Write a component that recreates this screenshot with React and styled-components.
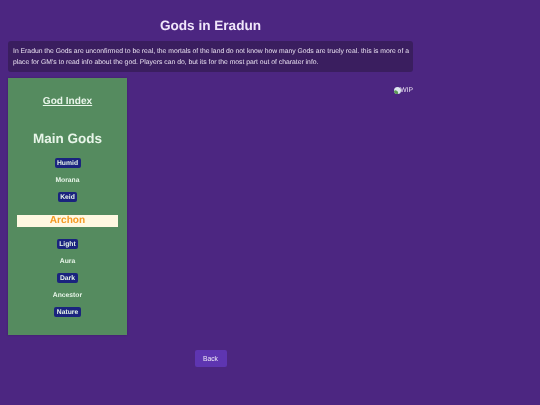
import React from "react";
import styled, { createGlobalStyle } from "styled-components";

const GlobalStyle = createGlobalStyle`
  html, body {
    margin: 0;
    padding: 0;
    background: #4c2681;
    font-family: "Liberation Sans", Arial, sans-serif;
    color: #f3e9fb;
    text-rendering: geometricPrecision;
  }
`;

const Page = styled.div`
  width: 405px;
  height: 405px;
  margin-left: 8px;
  display: flex;
  flex-direction: column;
  align-items: stretch;
  will-change: transform;
`;

const Title = styled.h1`
  margin: 0;
  padding-top: 17px;
  height: 24px;
  line-height: 17px;
  font-size: 13.6px;
  font-weight: 700;
  text-align: center;
  color: #f0e6fa;
`;

const Intro = styled.p`
  margin: 0;
  height: 31px;
  padding: 5px 4px 0 5px;
  box-sizing: border-box;
  background: #3a1e5f;
  border-radius: 3px;
  font-size: 6.8px;
  line-height: 11px;
  color: #e8e0f0;
`;

const Content = styled.div`
  display: flex;
  justify-content: space-between;
  align-items: flex-start;
  margin-top: 6px;
`;

const Sidebar = styled.aside`
  width: 119px;
  height: 257px;
  box-sizing: border-box;
  padding-top: 18px;
  background: #558b5f;
  box-shadow: 0 0 2px rgba(0, 0, 0, 0.2);
  display: flex;
  flex-direction: column;
  align-items: center;
`;

const IndexTitle = styled.h2`
  margin: 0;
  font-size: 10.1px;
  line-height: 12px;
  font-weight: 700;
  text-decoration: underline;
  color: #e8f5e9;
`;

const GroupTitle = styled.h2`
  margin: 22px 0 7px;
  font-size: 13.5px;
  line-height: 17px;
  font-weight: 700;
  color: #e8f5e9;
`;

const GodList = styled.div`
  display: flex;
  flex-direction: column;
  align-items: center;
  align-self: stretch;
`;

const God = styled.a`
  height: 17px;
  display: flex;
  align-items: center;
  font-size: 6.75px;
  font-weight: 700;
  color: #e8f5e9;

  span {
    padding: 2px 2.5px 1px;
    line-height: 7px;
    border-radius: 2px;
    background: ${(p) => (p.$active ? "#1a237e" : "transparent")};
  }
`;

const Banner = styled.div`
  align-self: stretch;
  margin: 10px 9px 8px;
  height: 12px;
  line-height: 12px;
  background: #fff8e1;
  color: #f59a23;
  font-size: 10.1px;
  font-weight: 700;
  text-align: center;
`;

const Wip = styled.div`
  margin-top: 8px;
  display: flex;
  align-items: center;
  height: 8px;
  font-size: 6.8px;
  color: #e8e0f0;

  svg {
    display: block;
    margin-right: -0.5px;
  }
`;

const Footer = styled.div`
  display: flex;
  justify-content: center;
  margin-top: 15px;
`;

const BackButton = styled.button`
  width: 32px;
  height: 17px;
  padding: 0;
  border: 0;
  border-radius: 2px;
  background: #5e35b1;
  color: #ede7f6;
  font-family: inherit;
  font-size: 6.75px;
`;

const topGods = [
  { name: "Humid", active: true },
  { name: "Morana" },
  { name: "Keid", active: true },
];

const lowerGods = [
  { name: "Light", active: true },
  { name: "Aura" },
  { name: "Dark", active: true },
  { name: "Ancestor" },
  { name: "Nature", active: true },
];

// broken image placeholder of the original page
const BrokenImage = () => (
  <svg width="7" height="7" viewBox="0 0 16 16" aria-hidden="true">
    <circle cx="8" cy="8" r="8" fill="#dde6ee" />
    <path d="M0 9c3-3 5-1 7 0s3 3 2 7c-5 1-9-3-9-7z" fill="#5c9a56" />
  </svg>
);

const App = () => {
  return (
    <Page>
      <GlobalStyle />
      <Title>Gods in Eradun</Title>
      <Intro>
        In Eradun the Gods are unconfirmed to be real, the mortals of the land do not know how many Gods are truely real. this is more of a place for GM's to read info about the god. Players can do, but its for the most part out of charater info.
      </Intro>
      <Content>
        <Sidebar>
          <IndexTitle>God Index</IndexTitle>
          <GroupTitle>Main Gods</GroupTitle>
          <GodList>
            {topGods.map((god) => (
              <God key={god.name} $active={god.active}>
                <span>{god.name}</span>
              </God>
            ))}
            <Banner>Archon</Banner>
            {lowerGods.map((god) => (
              <God key={god.name} $active={god.active}>
                <span>{god.name}</span>
              </God>
            ))}
          </GodList>
        </Sidebar>
        <Wip>
          <BrokenImage />
          WIP
        </Wip>
      </Content>
      <Footer>
        <BackButton>Back</BackButton>
      </Footer>
    </Page>
  );
};

export default App;
